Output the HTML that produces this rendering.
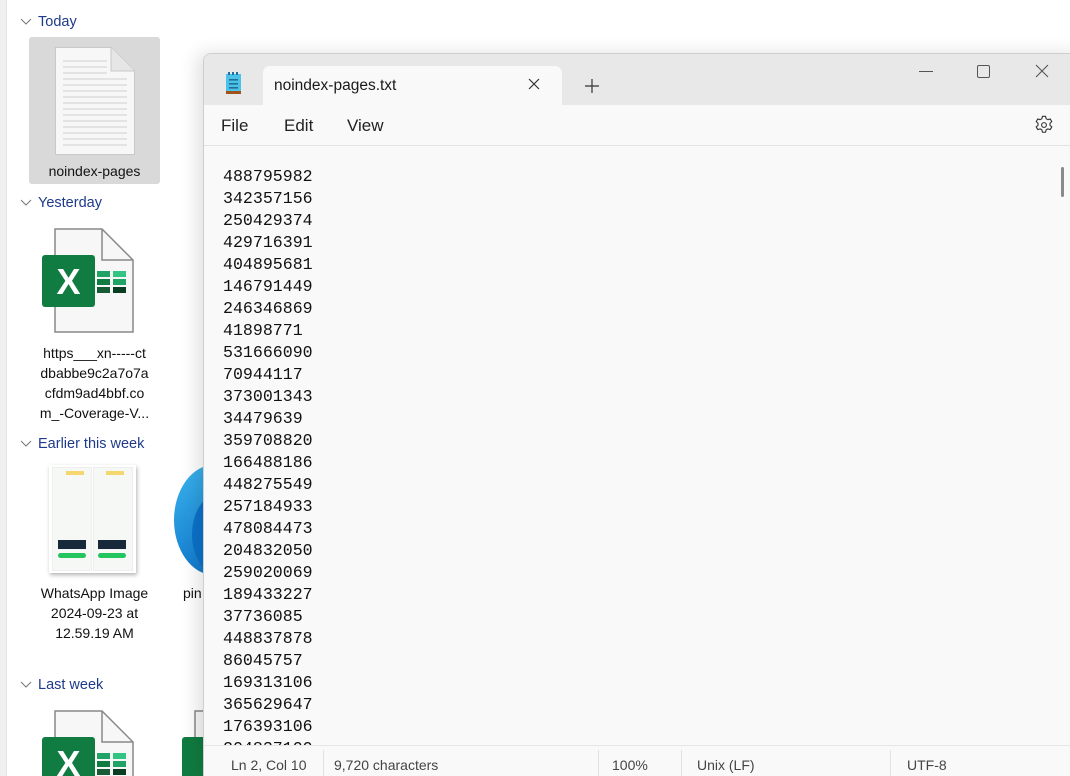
<!DOCTYPE html>
<html><head><meta charset="utf-8"><style>
*{margin:0;padding:0;box-sizing:border-box}
html,body{width:1070px;height:776px;overflow:hidden}
body{background:#fff;font-family:"Liberation Sans",sans-serif;position:relative}
.strip{position:absolute;left:0;top:0;width:7px;height:776px;background:#f0f0f0;border-right:1px solid #e4e4e4}
.grp{position:absolute;left:20px;font-size:14.5px;color:#1e3a8a;display:flex;align-items:center}
.grp svg{margin-right:6px}
.lbl{position:absolute;font-size:14px;color:#111;text-align:center;line-height:20px}
.win{position:absolute;left:203px;top:53px;width:880px;height:723px;background:#f9f9f9;border:1px solid #cfcfcf;border-bottom:none;border-radius:8px 0 0 0;box-shadow:-6px 0 18px rgba(0,0,0,.12);overflow:hidden}
.title{position:absolute;left:0;top:0;width:100%;height:51px;background:#e8e8e8}
.tab{position:absolute;left:59px;top:12px;width:299px;height:40px;background:#f9f9f9;border-radius:7px 7px 0 0}
.menu{position:absolute;top:51px;left:0;width:100%;height:41px;border-bottom:1px solid #e3e3e3;font-size:17px;color:#222}
.menu span{position:absolute;top:11px}
.txt{position:absolute;left:19px;top:112px;font-family:"Liberation Mono",monospace;font-size:16.6px;line-height:22px;color:#111}
.status{position:absolute;left:0;top:691px;width:100%;height:32px;background:#f9f9f9;border-top:1px solid #e6e6e6;font-size:14px;color:#444}
.status span{position:absolute;top:11px}
.sep{position:absolute;top:4px;width:1px;height:26px;background:#e2e2e2}
</style></head><body>
<div class="strip"></div>

<div class="grp" style="top:14px"><svg width="12" height="8"><path d="M1 1l5 5 5-5" stroke="#777" fill="none"/></svg>Today</div>
<div style="position:absolute;left:29px;top:37px;width:131px;height:147px;background:#d9d9d9;border-radius:3px"></div>
<svg style="position:absolute;left:55px;top:47px" width="80" height="108"><path d="M0.5 0.5H56L79.5 24V107.5H0.5Z" fill="#f7f7f7" stroke="#c8c8c8"/><path d="M56 0.5V24H79.5" fill="#e6e6e6" stroke="#c8c8c8"/>
<g stroke="#cfcfcf">
<line x1="8" y1="14" x2="52" y2="14"/><line x1="8" y1="20" x2="52" y2="20"/><line x1="8" y1="26" x2="52" y2="26"/>
<line x1="8" y1="32" x2="72" y2="32"/><line x1="8" y1="38" x2="72" y2="38"/><line x1="8" y1="44" x2="72" y2="44"/><line x1="8" y1="50" x2="72" y2="50"/><line x1="8" y1="56" x2="72" y2="56"/><line x1="8" y1="62" x2="72" y2="62"/><line x1="8" y1="68" x2="72" y2="68"/><line x1="8" y1="74" x2="72" y2="74"/><line x1="8" y1="80" x2="72" y2="80"/><line x1="8" y1="86" x2="72" y2="86"/><line x1="8" y1="92" x2="72" y2="92"/><line x1="8" y1="98" x2="72" y2="98"/></g></svg>
<div class="lbl" style="left:29px;top:161px;width:131px">noindex-pages</div>

<div class="grp" style="top:195px"><svg width="12" height="8"><path d="M1 1l5 5 5-5" stroke="#777" fill="none"/></svg>Yesterday</div>
<svg style="position:absolute;left:40px;top:228px" width="96" height="106"><path d="M15 1H62L93 32V104H15Z" fill="#f7f7f7" stroke="#888" stroke-width="1.5"/><path d="M62 1V32H93" fill="none" stroke="#888" stroke-width="1.5"/>
<rect x="2" y="27" width="53" height="52" rx="3" fill="#107c41"/><text x="28.5" y="66" font-family="Liberation Sans" font-weight="bold" font-size="36" fill="#fff" text-anchor="middle">X</text>
<rect x="57" y="43" width="13" height="6" fill="#21a366"/><rect x="73" y="43" width="13" height="6" fill="#33c481"/><rect x="57" y="51" width="13" height="6" fill="#107c41"/><rect x="73" y="51" width="13" height="6" fill="#21a366"/><rect x="57" y="59" width="13" height="6" fill="#185c37"/><rect x="73" y="59" width="13" height="6" fill="#0b3d22"/></svg>
<div class="lbl" style="left:29px;top:343px;width:131px">https___xn-----ct<br>dbabbe9c2a7o7a<br>cfdm9ad4bbf.co<br>m_-Coverage-V...</div>

<div class="grp" style="top:436px"><svg width="12" height="8"><path d="M1 1l5 5 5-5" stroke="#777" fill="none"/></svg>Earlier this week</div>
<div style="position:absolute;left:49px;top:465px;width:87px;height:108px;background:#fff;box-shadow:1px 2px 4px rgba(0,0,0,.3)"></div>
<div style="position:absolute;left:52px;top:467px;width:40px;height:104px;background:#f6f8f6;border:1px solid #eee"></div>
<div style="position:absolute;left:93px;top:467px;width:40px;height:104px;background:#f6f8f6;border:1px solid #eee"></div>
<div style="position:absolute;left:58px;top:540px;width:28px;height:9px;background:#17293b"></div>
<div style="position:absolute;left:98px;top:540px;width:28px;height:9px;background:#17293b"></div>
<div style="position:absolute;left:58px;top:553px;width:28px;height:5px;background:#22c55e;border-radius:3px"></div>
<div style="position:absolute;left:98px;top:553px;width:28px;height:5px;background:#22c55e;border-radius:3px"></div>
<div style="position:absolute;left:66px;top:471px;width:18px;height:4px;background:#f5d76e"></div>
<div style="position:absolute;left:106px;top:471px;width:18px;height:4px;background:#f5d76e"></div>
<div class="lbl" style="left:29px;top:583px;width:131px">WhatsApp Image<br>2024-09-23 at<br>12.59.19 AM</div>
<div style="position:absolute;left:174px;top:465px;width:80px;height:110px;border-radius:50%;background:linear-gradient(160deg,#3bb4ee,#0a6fc7)"></div>
<div style="position:absolute;left:192px;top:492px;width:60px;height:85px;border-radius:50%;background:#0b72c9"></div>
<div class="lbl" style="left:183px;top:583px">pin</div>

<div class="grp" style="top:677px"><svg width="12" height="8"><path d="M1 1l5 5 5-5" stroke="#777" fill="none"/></svg>Last week</div>
<svg style="position:absolute;left:40px;top:710px" width="96" height="66"><path d="M15 1H62L93 32V104H15Z" fill="#f7f7f7" stroke="#888" stroke-width="1.5"/><path d="M62 1V32H93" fill="none" stroke="#888" stroke-width="1.5"/>
<rect x="2" y="27" width="53" height="52" rx="3" fill="#107c41"/><text x="28.5" y="66" font-family="Liberation Sans" font-weight="bold" font-size="36" fill="#fff" text-anchor="middle">X</text>
<rect x="57" y="43" width="13" height="6" fill="#21a366"/><rect x="73" y="43" width="13" height="6" fill="#33c481"/><rect x="57" y="51" width="13" height="6" fill="#107c41"/><rect x="73" y="51" width="13" height="6" fill="#21a366"/><rect x="57" y="59" width="13" height="6" fill="#185c37"/><rect x="73" y="59" width="13" height="6" fill="#0b3d22"/></svg>
<svg style="position:absolute;left:181px;top:710px" width="30" height="66"><path d="M14 1H40V70H14Z" fill="#f7f7f7" stroke="#888" stroke-width="1.5"/><rect x="1" y="27" width="30" height="52" rx="3" fill="#107c41"/></svg>

<div class="win">
 <div class="title">
  <svg style="position:absolute;left:21px;top:17px" width="18" height="24"><rect x="1" y="3" width="15" height="17" fill="#4cc2e8"/><rect x="1" y="20" width="15" height="3" fill="#a0521d"/><g fill="#1e6f9a"><rect x="3" y="1" width="2" height="3"/><rect x="7" y="1" width="2" height="3"/><rect x="11" y="1" width="2" height="3"/><rect x="4" y="8" width="9" height="1.6"/><rect x="4" y="12" width="9" height="1.6"/><rect x="4" y="16" width="9" height="1.6"/></g></svg>
  <div class="tab"><span style="position:absolute;left:11px;top:11px;font-size:15.5px;color:#1a1a1a">noindex-pages.txt</span>
   <svg style="position:absolute;left:265px;top:12px" width="12" height="12"><path d="M1 1L11 11M11 1L1 11" stroke="#333" stroke-width="1.2"/></svg></div>
  <svg style="position:absolute;left:381px;top:25px" width="14" height="14"><path d="M7 0V14M0 7H14" stroke="#333" stroke-width="1.2"/></svg>
  <svg style="position:absolute;left:715px;top:16px" width="14" height="4"><path d="M0 1.5H14" stroke="#555"/></svg>
  <svg style="position:absolute;left:773px;top:11px" width="13" height="13"><rect x="0.5" y="0.5" width="12" height="12" rx="1.5" fill="none" stroke="#555"/></svg>
  <svg style="position:absolute;left:831px;top:10px" width="14" height="14"><path d="M1 1L13 13M13 1L1 13" stroke="#555" stroke-width="1.1"/></svg>
 </div>
 <div class="menu"><span style="left:17px">File</span><span style="left:80px">Edit</span><span style="left:143px">View</span>
  <svg style="position:absolute;left:829px;top:9px" width="22" height="22" viewBox="0 0 24 24"><path d="M10.3 2.5h3.4l.6 2.6 1.9 1.1 2.6-.8 1.7 2.9-2 1.8v2.2l2 1.8-1.7 2.9-2.6-.8-1.9 1.1-.6 2.6h-3.4l-.6-2.6-1.9-1.1-2.6.8-1.7-2.9 2-1.8v-2.2l-2-1.8 1.7-2.9 2.6.8 1.9-1.1z" fill="none" stroke="#333" stroke-width="1.2" stroke-linejoin="round"/><circle cx="12" cy="12" r="2.6" fill="none" stroke="#333" stroke-width="1.2"/></svg>
 </div>
 <div style="position:absolute;left:857px;top:113px;width:3px;height:30px;border-radius:2px;background:#8a8a8a"></div>
 <div class="txt">488795982<br>342357156<br>250429374<br>429716391<br>404895681<br>146791449<br>246346869<br>41898771<br>531666090<br>70944117<br>373001343<br>34479639<br>359708820<br>166488186<br>448275549<br>257184933<br>478084473<br>204832050<br>259020069<br>189433227<br>37736085<br>448837878<br>86045757<br>169313106<br>365629647<br>176393106<br>204837100</div>
 <div class="status">
  <span style="left:27px">Ln 2, Col 10</span><div class="sep" style="left:119px"></div>
  <span style="left:130px">9,720 characters</span><div class="sep" style="left:394px"></div>
  <span style="left:408px">100%</span><div class="sep" style="left:477px"></div>
  <span style="left:493px">Unix (LF)</span><div class="sep" style="left:686px"></div>
  <span style="left:703px">UTF-8</span>
 </div>
</div>
</body></html>
